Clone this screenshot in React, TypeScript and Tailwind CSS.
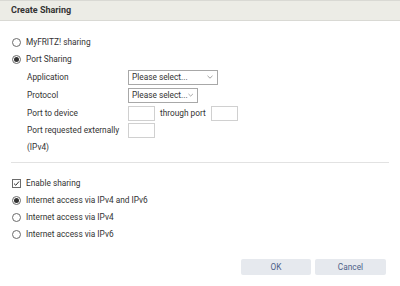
const Radio = ({ checked }: { checked?: boolean }) => (
  <span className="flex h-[9px] w-[9px] shrink-0 items-center justify-center rounded-full border border-[#6b6b6b] bg-white">
    {checked && <span className="h-[5px] w-[5px] rounded-full bg-[#333]" />}
  </span>
)

const Checkbox = () => (
  <span className="flex h-[9px] w-[9px] shrink-0 items-center justify-center border border-[#6b6b6b] bg-white">
    <svg width="7" height="7" viewBox="0 0 7 7">
      <path d="M1 3.6 L2.8 5.3 L6 1.5" stroke="#333" strokeWidth="1" fill="none" />
    </svg>
  </span>
)

const Select = ({ width }: { width: string }) => (
  <div className={`flex h-[15px] items-center justify-between whitespace-nowrap border border-[#a8a8a8] bg-white pl-[3px] pr-[4px] ${width}`}>
    <span className="text-[#333]">Please select...</span>
    <svg width="6" height="4" viewBox="0 0 6 4">
      <path d="M0.5 0.8 L3 3.2 L5.5 0.8" stroke="#888" strokeWidth="0.8" fill="none" />
    </svg>
  </div>
)

const Input = () => <div className="h-[15px] w-[27px] shrink-0 border border-[#d0d0d0] bg-white" />

const OptionRow = ({ children, label }: { children: React.ReactNode; label: string }) => (
  <div className="flex h-[17px] items-center gap-[5px] whitespace-nowrap pl-[12px]">
    {children}
    <span>{label}</span>
  </div>
)

const App = () => {
  return (
    <div
      className="flex h-[286px] w-[400px] flex-col bg-white text-[8.3px] text-[#333]"
      style={{ fontFamily: "Roboto, 'Liberation Sans', sans-serif" }}
    >
      {/* Header */}
      <div className="flex h-[21px] items-center border-t border-b border-[#d9d9d4] bg-[#ecece6] pl-[11px]">
        <span className="text-[9px] font-bold text-[#333]">Create Sharing</span>
      </div>

      <div className="mt-[13px] flex flex-col">
        <OptionRow label="MyFRITZ! sharing">
          <Radio />
        </OptionRow>
        <OptionRow label="Port Sharing">
          <Radio checked />
        </OptionRow>

        {/* Port sharing fields */}
        <div className="flex flex-col pl-[27px]">
          <div className="flex h-[18px] items-center">
            <span className="w-[101px]">Application</span>
            <Select width="w-[90px]" />
          </div>
          <div className="flex h-[18px] items-center">
            <span className="w-[101px]">Protocol</span>
            <Select width="w-[70px]" />
          </div>
          <div className="flex h-[18px] items-center whitespace-nowrap">
            <span className="w-[101px]">Port to device</span>
            <Input />
            <span className="mx-[5px]">through port</span>
            <Input />
          </div>
          <div className="mt-[1px] flex items-start">
            <span className="-mt-[1px] w-[101px] leading-[17px]">
              Port requested externally
              <br />
              (IPv4)
            </span>
            <Input />
          </div>
        </div>

        <div className="mx-[11px] mt-[6px] border-t border-[#e2e2e2]" />

        <div className="mt-[12px] flex flex-col">
          <OptionRow label="Enable sharing">
            <Checkbox />
          </OptionRow>
          <OptionRow label="Internet access via IPv4 and IPv6">
            <Radio checked />
          </OptionRow>
          <OptionRow label="Internet access via IPv4">
            <Radio />
          </OptionRow>
          <OptionRow label="Internet access via IPv6">
            <Radio />
          </OptionRow>
        </div>
      </div>

      {/* Footer buttons */}
      <div className="mt-auto mb-[11px] flex justify-end gap-[4px] pr-[14px]">
        <button className="h-[16px] w-[70px] rounded-[2px] bg-[#e6e9ee] text-[#4d5f88]">OK</button>
        <button className="h-[16px] w-[71px] rounded-[2px] bg-[#e6e9ee] text-[#4d5f88]">Cancel</button>
      </div>
    </div>
  )
}

export default App
